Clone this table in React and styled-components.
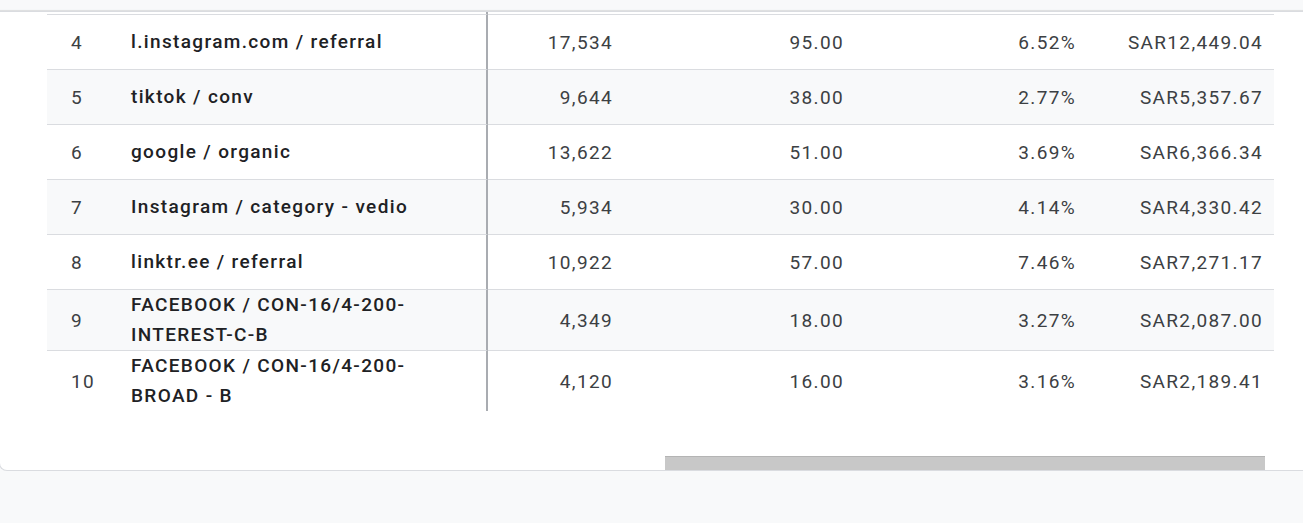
import React from "react";
import styled, { createGlobalStyle } from "styled-components";

const Global = createGlobalStyle`
html, body {
  margin: 0;
  padding: 0;
  background: #f8f9fa;
  overflow: hidden;
  font-family: Roboto, "Liberation Sans", Arial, sans-serif;
}
`

const Page = styled.div`
height: 523px;
padding-top: 11px;
box-sizing: border-box;
background: #f8f9fa;
`
const Card = styled.div`
background: white;
border: 1px solid #dadce0;
border-right: none;
border-radius: 0 0 0 8px;
margin-left: -1px;
margin-right: -20px;
box-shadow: 0 -1px 1px rgba(60, 64, 67, 0.15);
`
const Scroller = styled.div`
padding-left: 47px;
width: 1227px;
`
const Row = styled.div`
display: grid;
grid-template-columns: 72px 369px 136px 231px 232px 187px;
background: ${p => (p.$striped ? "#f8f9fa" : "white")};
`
const Cell = styled.div`
display: flex;
align-items: center;
box-sizing: border-box;
min-height: ${p => (p.$stub ? "3px" : "55px")};
border-bottom: ${p => (p.$last ? "none" : "1px solid #dadce0")};
font-size: 19px;
letter-spacing: 1.35px;
color: #3c4043;
`
const Rank = styled(Cell)`
padding-left: 24px;
`
const Dimension = styled(Cell)`
padding: 0 32px 0 12px;
font-weight: 500;
color: #202124;
line-height: 30px;
border-right: 2px solid #a9acb1;
`
const Num = styled(Cell)`
justify-content: flex-end;
padding-right: 11px;
`
const Track = styled.div`
height: 14px;
margin-top: 45px;
`
const Thumb = styled.div`
margin-left: 618px;
width: 600px;
height: 14px;
box-sizing: border-box;
background: #c8c8c8;
border-top: 1px solid #b4b4b4;
`

const rows = [
  [4, "l.instagram.com / referral", "17,534", "95.00", "6.52%", "SAR12,449.04"],
  [5, "tiktok / conv", "9,644", "38.00", "2.77%", "SAR5,357.67"],
  [6, "google / organic", "13,622", "51.00", "3.69%", "SAR6,366.34"],
  [7, "Instagram / category - vedio", "5,934", "30.00", "4.14%", "SAR4,330.42"],
  [8, "linktr.ee / referral", "10,922", "57.00", "7.46%", "SAR7,271.17"],
  [9, "FACEBOOK / CON-16/4-200-INTEREST-C-B", "4,349", "18.00", "3.27%", "SAR2,087.00"],
  [10, "FACEBOOK / CON-16/4-200-BROAD - B", "4,120", "16.00", "3.16%", "SAR2,189.41"],
];

export default function App() {
  return (
    <Page>
      <Global />
      <Card>
        <Scroller>
          <Row>
            <Rank $stub></Rank>
            <Dimension $stub></Dimension>
            <Num $stub></Num>
            <Num $stub></Num>
            <Num $stub></Num>
            <Num $stub></Num>
          </Row>
          {rows.map((r, i) => {
            const last = i === rows.length - 1;
            return (
              <Row key={r[0]} $striped={i % 2 === 1}>
                <Rank $last={last}>{r[0]}</Rank>
                <Dimension $last={last}>{r[1]}</Dimension>
                <Num $last={last}>{r[2]}</Num>
                <Num $last={last}>{r[3]}</Num>
                <Num $last={last}>{r[4]}</Num>
                <Num $last={last}>{r[5]}</Num>
              </Row>
            );
          })}
          <Track>
            <Thumb />
          </Track>
        </Scroller>
      </Card>
    </Page>
  );
}
